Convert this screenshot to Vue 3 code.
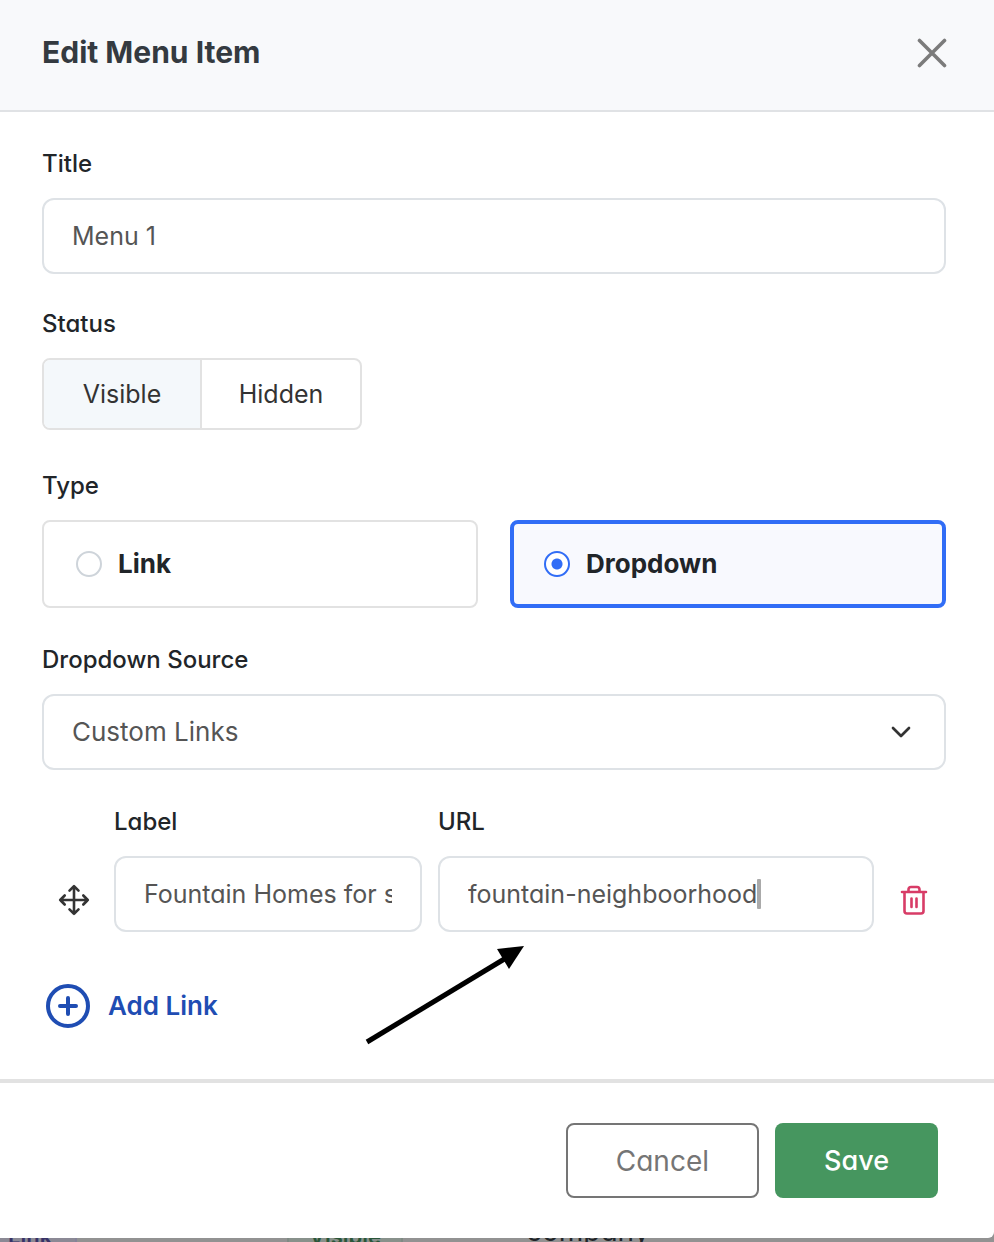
<template>
  <div class="page">
    <section class="modal" role="dialog" aria-labelledby="modal-title">
      <header class="modal-header">
        <h1 id="modal-title">Edit Menu Item</h1>
        <button type="button" class="icon-button close-button" aria-label="Close">
          <svg width="32" height="32" viewBox="0 0 32 32" fill="none" stroke="currentColor" stroke-width="3.6" stroke-linecap="round">
            <path d="M3.5 4.5 28.5 29.5M28.5 4.5 3.5 29.5" />
          </svg>
        </button>
      </header>

      <form class="modal-body" @submit.prevent>
        <div class="field title-field">
          <label for="item-title">Title</label>
          <input id="item-title" v-model="title" class="control" type="text" />
        </div>

        <div class="field status-field">
          <span id="status-label" class="field-label">Status</span>
          <div class="segmented" role="group" aria-labelledby="status-label">
            <button
              v-for="option in statuses"
              :key="option"
              type="button"
              :class="{ active: status === option }"
              :aria-pressed="status === option"
              @click="status = option"
            >
              {{ option }}
            </button>
          </div>
        </div>

        <div class="field">
          <span id="type-label" class="field-label">Type</span>
          <div class="type-options" role="radiogroup" aria-labelledby="type-label">
            <label v-for="option in types" :key="option" class="type-card" :class="{ selected: type === option }">
              <input v-model="type" type="radio" name="item-type" :value="option" />
              <span>{{ option }}</span>
            </label>
          </div>
        </div>

        <div class="field">
          <label for="dropdown-source">Dropdown Source</label>
          <div class="select-wrap">
            <select id="dropdown-source" v-model="source" class="control">
              <option>Custom Links</option>
              <option>Pages</option>
            </select>
            <svg class="chevron" width="24" height="24" viewBox="0 0 24 24" fill="none" stroke="currentColor" stroke-width="2.7" stroke-linecap="round" stroke-linejoin="round">
              <path d="M4 8l8 8 8-8" />
            </svg>
          </div>
        </div>

        <div class="link-row">
          <button type="button" class="icon-button move-button" aria-label="Move link">
            <svg width="32" height="32" viewBox="0 0 32 32" fill="none" stroke="currentColor" stroke-width="2.6" stroke-linecap="round" stroke-linejoin="round">
              <path d="M16 2.200v27.600M2.200 16h27.600M11.500 6.700 16 2.200l4.500 4.500M11.500 25.300 16 29.800l4.500-4.500M6.700 11.500 2.200 16l4.500 4.500M25.300 11.500 29.800 16l-4.500 4.500" />
            </svg>
          </button>
          <div class="field link-field">
            <label for="link-label">Label</label>
            <input id="link-label" v-model="linkLabel" class="control" type="text" />
          </div>
          <div class="field link-field">
            <label for="link-url">URL</label>
            <div class="control url-control">
              <input id="link-url" v-model="linkUrl" type="text" />
              <span class="caret"></span>
            </div>
          </div>
          <button type="button" class="icon-button delete-button" aria-label="Delete link">
            <svg width="32" height="32" viewBox="0 0 32 32" fill="none" stroke="currentColor" stroke-width="2.6" stroke-linecap="round" stroke-linejoin="round">
              <path d="M4 8h24M6.500 8v19q0 2.500 2.500 2.500h14q2.500 0 2.500-2.500V8M10.500 8V5.500q0-2.500 2.500-2.500h6q2.500 0 2.500 2.500V8M13.500 14.500v8.500M18.500 14.500v8.500" />
            </svg>
          </button>
        </div>

        <button type="button" class="add-link">
          <svg width="44" height="44" viewBox="0 0 44 44" fill="none" stroke="currentColor" stroke-width="4" stroke-linecap="round">
            <circle cx="22" cy="22" r="20" />
            <path d="M22 14v16M14 22h16" />
          </svg>
          <span>Add Link</span>
        </button>

        <svg class="pointer" width="160" height="102" viewBox="0 0 160 102" aria-hidden="true">
          <path d="M3 98 142 14" stroke="#000" stroke-width="5" />
          <path d="M160 2 133 5 145 25z" />
        </svg>
      </form>

      <footer class="modal-footer">
        <button type="button" class="button cancel">Cancel</button>
        <button type="button" class="button save">Save</button>
      </footer>
    </section>

    <div class="backdrop-row" aria-hidden="true">
      <span class="tag tag-type">Link</span>
      <span class="tag tag-status">Visible</span>
      <span class="slug">company</span>
    </div>
  </div>
</template>

<script setup>
import { ref } from 'vue'

const statuses = ['Visible', 'Hidden']
const types = ['Link', 'Dropdown']

const title = ref('Menu 1')
const status = ref('Visible')
const type = ref('Dropdown')
const source = ref('Custom Links')
const linkLabel = ref('Fountain Homes for sale')
const linkUrl = ref('fountain-neighboorhood')
</script>

<style>
body {
  margin: 0;
  background: #929292;
}
</style>

<style scoped>
.page {
  height: 100vh;
  overflow: hidden;
  font-family: Inter, 'Liberation Sans', sans-serif;
  font-feature-settings: 'cv11';
  color: #212529;
}

.page * {
  box-sizing: border-box;
}

button,
input,
select {
  font: inherit;
  font-feature-settings: inherit;
  color: inherit;
}

button {
  padding: 0;
  border: 0;
  background: none;
  cursor: pointer;
}

svg {
  display: block;
  flex: none;
}

.modal {
  position: relative;
  z-index: 1;
  background: #ffffff;
  border-radius: 0 0 6px 0;
}

.modal-header {
  display: flex;
  justify-content: space-between;
  align-items: center;
  padding: 30px 38px 36px 42px;
  background: #f8f9fb;
  border-bottom: 2px solid #e0e2e5;
}

.modal-header h1 {
  margin: 0;
  font-size: 30px;
  font-weight: 700;
  line-height: 44px;
  color: #343a40;
}

.icon-button {
  display: flex;
  justify-content: center;
  align-items: center;
}

.close-button {
  width: 48px;
  height: 44px;
  color: #7b7b7b;
}

.modal-body {
  position: relative;
  padding: 36px 48px 51px 42px;
}

.field {
  margin-bottom: 36px;
}

.title-field {
  margin-bottom: 34px;
}

.status-field {
  margin-bottom: 40px;
}

.field > label,
.field-label {
  display: block;
  margin-bottom: 18px;
  font-size: 24px;
  font-weight: 500;
  line-height: 32px;
}

.control {
  display: block;
  width: 100%;
  height: 76px;
  padding: 0 28px;
  border: 2px solid #dee2e6;
  border-radius: 12px;
  background: #ffffff;
  color: #555555;
  font-size: 25px;
  outline: none;
}

.segmented {
  display: grid;
  grid-template-columns: 1fr 1fr;
  width: 320px;
  height: 72px;
  overflow: hidden;
  border: 2px solid #e2e2e2;
  border-radius: 8px;
}

.segmented button {
  color: #333333;
  font-size: 25px;
}

.segmented button:first-child {
  border-right: 2px solid #e2e2e2;
}

.segmented .active {
  background: #f4f8fb;
}

.type-options {
  display: grid;
  grid-template-columns: 1fr 1fr;
  gap: 32px;
}

.type-card {
  display: flex;
  align-items: center;
  gap: 16px;
  height: 88px;
  padding: 0 32px;
  border: 2px solid #e2e2e2;
  border-radius: 8px;
  font-size: 26px;
  font-weight: 700;
}

.type-card span,
.add-link span {
  padding-bottom: 2px;
}

.type-card.selected {
  padding: 0 30px;
  border: 4px solid #316df6;
  background: #f8f9fe;
}

.type-card input {
  appearance: none;
  width: 26px;
  height: 26px;
  margin: 0;
  border: 2px solid #ced4da;
  border-radius: 50%;
  background: #ffffff;
}

.type-card input:checked {
  border-color: #316df6;
  background: radial-gradient(circle, #316df6 5px, #ffffff 6px);
}

.select-wrap {
  position: relative;
}

.select-wrap select {
  appearance: none;
  padding-bottom: 2px;
  font-size: 26px;
}

.chevron {
  position: absolute;
  top: 26px;
  right: 33px;
  color: #333333;
  pointer-events: none;
}

.link-row {
  display: grid;
  grid-template-columns: 56px 308fr 436fr 56px;
  align-items: end;
  column-gap: 16px;
  margin-bottom: 52px;
}

.link-field {
  min-width: 0;
  margin-bottom: 0;
}

.link-row .icon-button {
  width: 48px;
  height: 64px;
}

.move-button {
  justify-self: end;
  color: #333333;
}

.delete-button {
  color: #d83c67;
}

.url-control {
  display: flex;
  align-items: center;
}

.url-control input {
  field-sizing: content;
  min-width: 0;
  padding: 0;
  border: 0;
  background: none;
  outline: none;
}

.caret {
  flex: none;
  width: 4px;
  height: 30px;
  border-radius: 1px;
  background: #aaaaaa;
}

.add-link {
  display: flex;
  align-items: center;
  gap: 18px;
  margin-left: 4px;
  color: #1f4db3;
  font-size: 26px;
  font-weight: 600;
}

.pointer {
  position: absolute;
  top: 832px;
  left: 364px;
  pointer-events: none;
}

.modal-footer {
  display: flex;
  justify-content: flex-end;
  gap: 16px;
  padding: 40px 56px 40px 42px;
  border-top: 4px solid #e2e2e2;
}

.button {
  height: 75px;
  padding: 0 48px;
  border-radius: 8px;
  font-size: 28px;
}

.cancel {
  border: 2px solid #757575;
  color: #757575;
}

.save {
  padding: 0 49px;
  background: #46965f;
  color: #ffffff;
  font-size: 27px;
  font-weight: 500;
}

/* Table row showing from behind the dialog */
.backdrop-row {
  display: grid;
  grid-template-columns: 77px 326px 1fr;
  height: 36px;
  margin-top: -32px;
  background: #929292;
  line-height: 50px;
}

.tag {
  font-size: 22px;
  font-weight: 600;
  line-height: 60px;
}

.tag-type {
  padding-left: 8px;
  border-right: 2px solid #85829a;
  background: #8b8995;
  color: #373267;
}

.tag-status {
  width: 116px;
  margin-left: 210px;
  border: solid #7f8a84;
  border-width: 0 2px;
  background: #88918b;
  color: #2a5639;
  text-align: center;
}

.slug {
  margin-left: 123px;
  font-size: 28px;
}
</style>
